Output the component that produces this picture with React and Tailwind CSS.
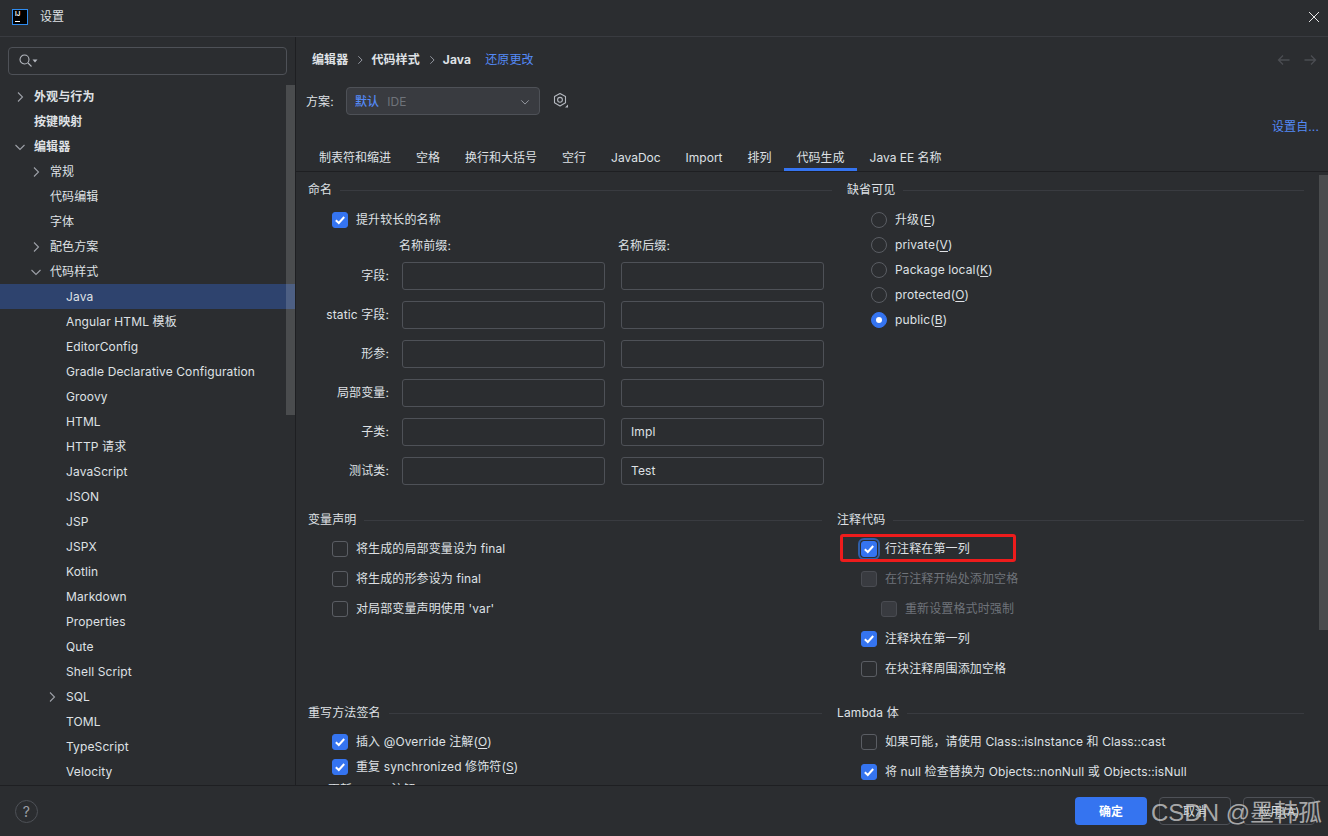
import React from 'react';

const tree = [
  { label: '外观与行为', level: 0, arrow: 'right', bold: true },
  { label: '按键映射', level: 0, bold: true },
  { label: '编辑器', level: 0, arrow: 'down', bold: true },
  { label: '常规', level: 1, arrow: 'right' },
  { label: '代码编辑', level: 1 },
  { label: '字体', level: 1 },
  { label: '配色方案', level: 1, arrow: 'right' },
  { label: '代码样式', level: 1, arrow: 'down' },
  { label: 'Java', level: 2, selected: true },
  { label: 'Angular HTML 模板', level: 2 },
  { label: 'EditorConfig', level: 2 },
  { label: 'Gradle Declarative Configuration', level: 2 },
  { label: 'Groovy', level: 2 },
  { label: 'HTML', level: 2 },
  { label: 'HTTP 请求', level: 2 },
  { label: 'JavaScript', level: 2 },
  { label: 'JSON', level: 2 },
  { label: 'JSP', level: 2 },
  { label: 'JSPX', level: 2 },
  { label: 'Kotlin', level: 2 },
  { label: 'Markdown', level: 2 },
  { label: 'Properties', level: 2 },
  { label: 'Qute', level: 2 },
  { label: 'Shell Script', level: 2 },
  { label: 'SQL', level: 2, arrow: 'right' },
  { label: 'TOML', level: 2 },
  { label: 'TypeScript', level: 2 },
  { label: 'Velocity', level: 2 },
];

const tabs = ['制表符和缩进', '空格', '换行和大括号', '空行', 'JavaDoc', 'Import', '排列', '代码生成', 'Java EE 名称'];

const fields = [
  { label: '字段:' },
  { label: 'static 字段:' },
  { label: '形参:' },
  { label: '局部变量:' },
  { label: '子类:', suffix: 'Impl' },
  { label: '测试类:', suffix: 'Test' },
];

const Chevron = ({ dir, className }) => (
  <svg width="12" height="12" viewBox="0 0 12 12" fill="none" stroke="currentColor" strokeWidth="1.1" className={className}>
    {dir === 'down' ? <path d="M1.5 4 L6 8.5 L10.5 4" /> : <path d="M4 1.5 L8.5 6 L4 10.5" />}
  </svg>
);

const TreeRow = ({ item }) => {
  const pad = ['pl-[34px]', 'pl-[50px]', 'pl-[66px]'][item.level];
  const arrowPos = ['left-[14px]', 'left-[30px]', 'left-[46px]'][item.level];
  return (
    <div className={`relative h-[25px] flex items-center ${pad} ${item.selected ? 'bg-[#2e436e]' : ''} ${item.bold ? 'font-bold' : ''}`}>
      {item.arrow && <Chevron dir={item.arrow} className={`absolute ${arrowPos} text-[#9da0a8]`} />}
      {item.label}
    </div>
  );
};

const Check = ({ checked, disabled, focused }) => (
  <span
    className={`w-4 h-4 shrink-0 rounded-[3px] flex items-center justify-center border ${
      checked ? 'bg-[#3574f0] border-[#3574f0]' : disabled ? 'bg-[#393b40] border-[#4a4c52]' : 'border-[#5a5d63]'
    } ${focused ? 'outline-2 outline-offset-1 outline-[#2f5ea8]' : ''}`}
  >
    {checked && (
      <svg width="12" height="12" viewBox="0 0 12 12" fill="none" stroke="#fff" strokeWidth="2">
        <path d="M1.8 6.2 L4.8 9 L10.2 3" />
      </svg>
    )}
  </span>
);

const CheckRow = ({ children, checked, disabled, focused, indent, h = 'h-[30px]' }) => (
  <div className={`${h} flex items-center gap-2 ${indent ? 'pl-11' : 'pl-6'} ${disabled ? 'text-[#6f737a]' : ''}`}>
    <Check checked={checked} disabled={disabled} focused={focused} />
    <span>{children}</span>
  </div>
);

const Radio = ({ children, checked }) => (
  <div className="h-[25px] flex items-center gap-2 pl-6">
    <span className={`w-4 h-4 rounded-full flex items-center justify-center border ${checked ? 'bg-[#3574f0] border-[#3574f0]' : 'border-[#5a5d63]'}`}>
      {checked && <span className="w-[6px] h-[6px] rounded-full bg-white" />}
    </span>
    <span>{children}</span>
  </div>
);

const U = ({ children }) => <span className="underline underline-offset-2">{children}</span>;

const Section = ({ title, className, children }) => (
  <div className={className}>
    <div className="h-5 flex items-center gap-2">
      <span>{title}</span>
      <span className="flex-1 h-px bg-[#393b40]" />
    </div>
    {children}
  </div>
);

const Input = ({ value }) => (
  <div className="w-[203px] h-[28px] px-[9px] flex items-center rounded-[3px] border border-[#4e5157]">{value}</div>
);

export default function App() {
  return (
    <div className="relative w-[1328px] h-[836px] overflow-hidden flex flex-col bg-[#2b2d30] text-[#dfe1e5] text-[12px] tracking-[0.01em] font-['Inter','Noto_Sans_CJK_SC',sans-serif]">
      {/* title bar */}
      <div className="h-[37px] shrink-0 flex items-center pl-3 pr-2 pb-[2px] border-b border-[#393b40]">
        <div className="w-4 h-4 bg-black border border-[#2f8cf0] relative mr-3">
          <span className="absolute left-[2px] top-0 text-[6px] leading-[8px] font-bold text-white">IJ</span>
          <span className="absolute left-[2px] bottom-[2px] w-[5px] h-px bg-white" />
        </div>
        <span>设置</span>
        <svg width="12" height="12" viewBox="0 0 12 12" stroke="#e6e6e6" strokeWidth="1" className="ml-auto">
          <path d="M1 1 L11 11 M11 1 L1 11" />
        </svg>
      </div>

      <div className="flex-1 min-h-0 flex">
        {/* sidebar */}
        <div className="relative w-[296px] shrink-0 border-r border-[#1e1f22] overflow-hidden">
          <div className="mx-2 mt-[10px] mb-[9px] h-[28px] rounded-[4px] border border-[#4e5157] flex items-center pl-[9px] text-[#b4b8bf]">
            <svg width="16" height="16" viewBox="0 0 16 16" fill="none" stroke="currentColor" strokeWidth="1.1">
              <circle cx="6.5" cy="6.5" r="4.5" />
              <path d="M10 10 L13.5 13.5" />
            </svg>
            <svg width="6" height="4" viewBox="0 0 6 4" fill="currentColor" className="-ml-[2px]">
              <path d="M0.5 0.5 H5.5 L3 3.5 Z" />
            </svg>
          </div>
          {tree.map((item) => (
            <TreeRow key={item.label} item={item} />
          ))}
          <div className="absolute right-0 top-[48px] w-[9px] h-[330px] bg-white/[0.15]" />
        </div>

        {/* main */}
        <div className="relative flex-1 min-w-0 flex flex-col">
          <div className="h-[50px] pt-[13px] pl-4 pr-[11px] flex items-start shrink-0">
            <div className="h-5 flex items-center font-bold">
              <span>编辑器</span>
              <Chevron dir="right" className="ml-[7px] mr-[6px] w-[10px] h-[10px] text-[#9da0a8]" />
              <span>代码样式</span>
              <Chevron dir="right" className="ml-[7px] mr-[6px] w-[10px] h-[10px] text-[#9da0a8]" />
              <span>Java</span>
              <span className="ml-[14px] font-normal text-[#548af7]">还原更改</span>
            </div>
            <div className="ml-auto h-5 flex items-center gap-[14px] text-[#4b4d52]">
              <svg width="13" height="12" viewBox="0 0 13 12" fill="none" stroke="currentColor" strokeWidth="1.3"><path d="M12.5 6 H1.5 M6 1.5 L1.5 6 L6 10.5" /></svg>
              <svg width="13" height="12" viewBox="0 0 13 12" fill="none" stroke="currentColor" strokeWidth="1.3"><path d="M0.5 6 H11.5 M7 1.5 L11.5 6 L7 10.5" /></svg>
            </div>
          </div>

          <div className="h-7 flex items-center pl-[10px] shrink-0">
            <span className="w-10 pt-[1px]">方案:</span>
            <div className="w-[194px] h-7 pt-[1px] rounded-[4px] border border-[#4e5157] bg-[#393b40] flex items-center pl-2 pr-2">
              <span className="text-[#548af7] font-medium">默认</span>
              <span className="ml-2 text-[#6f737a]">IDE</span>
              <Chevron dir="down" className="ml-auto mr-[1px] w-[10px] h-[10px] text-[#9da0a8]" />
            </div>
            <svg width="18" height="18" viewBox="0 0 18 18" fill="none" stroke="#b4b8bf" strokeWidth="1.1" className="ml-3">
              <path d="M8 1.5 L13.5 4.6 V10.8 L8 14 L2.5 10.8 V4.6 Z" strokeLinejoin="round" />
              <circle cx="8" cy="7.8" r="2.4" />
              <path d="M13 15.5 H16 V12.5 Z" fill="#b4b8bf" stroke="none" />
            </svg>
          </div>

          <div className="h-[57px] shrink-0 flex flex-col border-b border-[#1e1f22]">
            <div className="h-[23px] pr-[9px] flex items-center justify-end text-[#548af7]">设置自...</div>
            <div className="mt-auto h-[27px] pl-[10.5px] flex tracking-normal">
              {tabs.map((t) => (
                <div key={t} className={`px-[12.5px] flex items-center ${t === '代码生成' ? 'border-b-[3px] border-[#3574f0] pt-[4px]' : 'pt-[1px]'}`}>
                  {t}
                </div>
              ))}
            </div>
          </div>

          {/* settings body */}
          <div className="flex-1 min-h-0 overflow-hidden pt-2 pl-3 pr-6">
            <div className="flex h-[330px] gap-[15px]">
              <Section title="命名" className="w-[524px]">
                <CheckRow checked h="h-[40px]">提升较长的名称</CheckRow>
                <div className="flex h-[12px] items-center pl-[91px] mb-[2px]">
                  <span className="w-[219px]">名称前缀:</span>
                  <span>名称后缀:</span>
                </div>
                <div className="pt-[2px]">
                  {fields.map((f) => (
                    <div key={f.label} className="h-[39px] flex items-center">
                      <span className="w-[81px] text-right mr-[13px]">{f.label}</span>
                      <Input />
                      <span className="w-4" />
                      <Input value={f.suffix} />
                    </div>
                  ))}
                </div>
              </Section>
              <Section title="缺省可见" className="flex-1">
                <div className="h-[7px]" />
                <Radio>升级(<U>E</U>)</Radio>
                <Radio>private(<U>V</U>)</Radio>
                <Radio>Package local(<U>K</U>)</Radio>
                <Radio>protected(<U>O</U>)</Radio>
                <Radio checked>public(<U>B</U>)</Radio>
              </Section>
            </div>

            <div className="flex h-[193px] gap-[15px]">
              <Section title="变量声明" className="w-[514px]">
                <div className="h-[4px]" />
                <CheckRow>将生成的局部变量设为 final</CheckRow>
                <CheckRow>将生成的形参设为 final</CheckRow>
                <CheckRow>对局部变量声明使用 'var'</CheckRow>
              </Section>
              <Section title="注释代码" className="flex-1">
                <div className="h-[4px]" />
                <CheckRow checked focused>行注释在第一列</CheckRow>
                <CheckRow disabled>在行注释开始处添加空格</CheckRow>
                <CheckRow disabled indent>重新设置格式时强制</CheckRow>
                <CheckRow checked>注释块在第一列</CheckRow>
                <CheckRow>在块注释周围添加空格</CheckRow>
              </Section>
            </div>

            <div className="flex gap-[15px]">
              <Section title="重写方法签名" className="w-[514px]">
                <div className="h-[6px]" />
                <CheckRow checked h="h-[25px]">插入 @Override 注解(<U>O</U>)</CheckRow>
                <CheckRow checked h="h-[25px]">重复 synchronized 修饰符(<U>S</U>)</CheckRow>
                <div className="h-[22px] pl-5 flex items-center">更新 NULL 注解</div>
              </Section>
              <Section title="Lambda 体" className="flex-1">
                <div className="h-[4px]" />
                <CheckRow>如果可能，请使用 Class::isInstance 和 Class::cast</CheckRow>
                <CheckRow checked>将 null 检查替换为 Objects::nonNull 或 Objects::isNull</CheckRow>
              </Section>
            </div>
          </div>

          <div className="absolute right-0 top-[138px] w-[9px] h-[455px] bg-white/[0.15]" />
        </div>
      </div>

      {/* footer */}
      <div className="h-[51px] shrink-0 border-t border-[#1e1f22] flex items-center pl-[15px] pr-[13px]">
        <div className="w-[23px] h-[23px] rounded-full border border-[#4e5157] flex items-center justify-center text-[14px] text-[#9da0a8]">?</div>
        <div className="ml-auto flex gap-[12px]">
          <div className="w-[72px] h-7 pt-[1px] rounded-[4px] bg-[#3574f0] text-white font-bold flex items-center justify-center">确定</div>
          <div className="w-[72px] h-7 pt-[1px] rounded-[4px] border border-[#4e5157] flex items-center justify-center">取消</div>
          <div className="w-[72px] h-7 pt-[1px] rounded-[4px] border border-[#4e5157] flex items-center justify-center">应用(A)</div>
        </div>
      </div>

      {/* annotation + watermark */}
      <div className="absolute left-[840px] top-[534px] w-[176px] h-[28px] rounded-[3px] border-[3px] border-[#ee1c1c]" />
      <div className="absolute left-[1151px] top-[797px] text-[24px] leading-[32px] tracking-normal text-[#c9c9c9]/80 font-['Liberation_Sans','Noto_Sans_CJK_SC',sans-serif]">
        CSDN @墨韩孤
      </div>
    </div>
  );
}
